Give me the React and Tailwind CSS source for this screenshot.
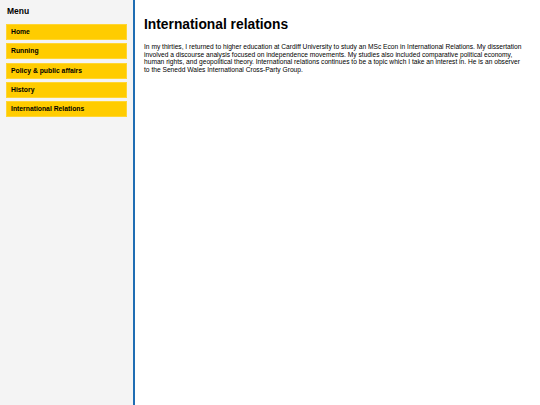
import React from "react";

const items = ["Home", "Running", "Policy & public affairs", "History", "International Relations"];

export default function App() {
  return (
    <div className="flex min-h-[405px] w-[540px] font-['Liberation_Sans',Arial,sans-serif] text-black">
      <aside className="w-[135px] shrink-0 bg-[#f4f4f4] border-r-2 border-[#1f6db3] px-[6px] pt-[6px]">
        <h2 className="text-[8.5px] font-bold leading-[10px] pl-[1px]">Menu</h2>
        <nav className="mt-[8px] flex flex-col gap-[3.25px]">
          {items.map((it) => (
            <a
              key={it}
              className="block h-[16px] bg-[#ffcc00] border border-[#ffd633] pl-[4px] text-[6.8px] font-bold leading-[14px] w-[121px]"
            >
              {it}
            </a>
          ))}
        </nav>
      </aside>
      <main className="flex-1 pl-[9px] pr-[14px] pt-[17px]">
        <h1 className="text-[13.8px] font-bold leading-[16px]">International relations</h1>
        <p className="mt-[10px] text-[6.65px] leading-[7.5px]">
          In my thirties, I returned to higher education at Cardiff University to study an MSc Econ in International Relations. My dissertation involved a discourse analysis focused on independence movements. My studies also included comparative political economy, human rights, and geopolitical theory. International relations continues to be a topic which I take an interest in. He is an observer to the Senedd Wales International Cross-Party Group.
        </p>
      </main>
    </div>
  );
}
